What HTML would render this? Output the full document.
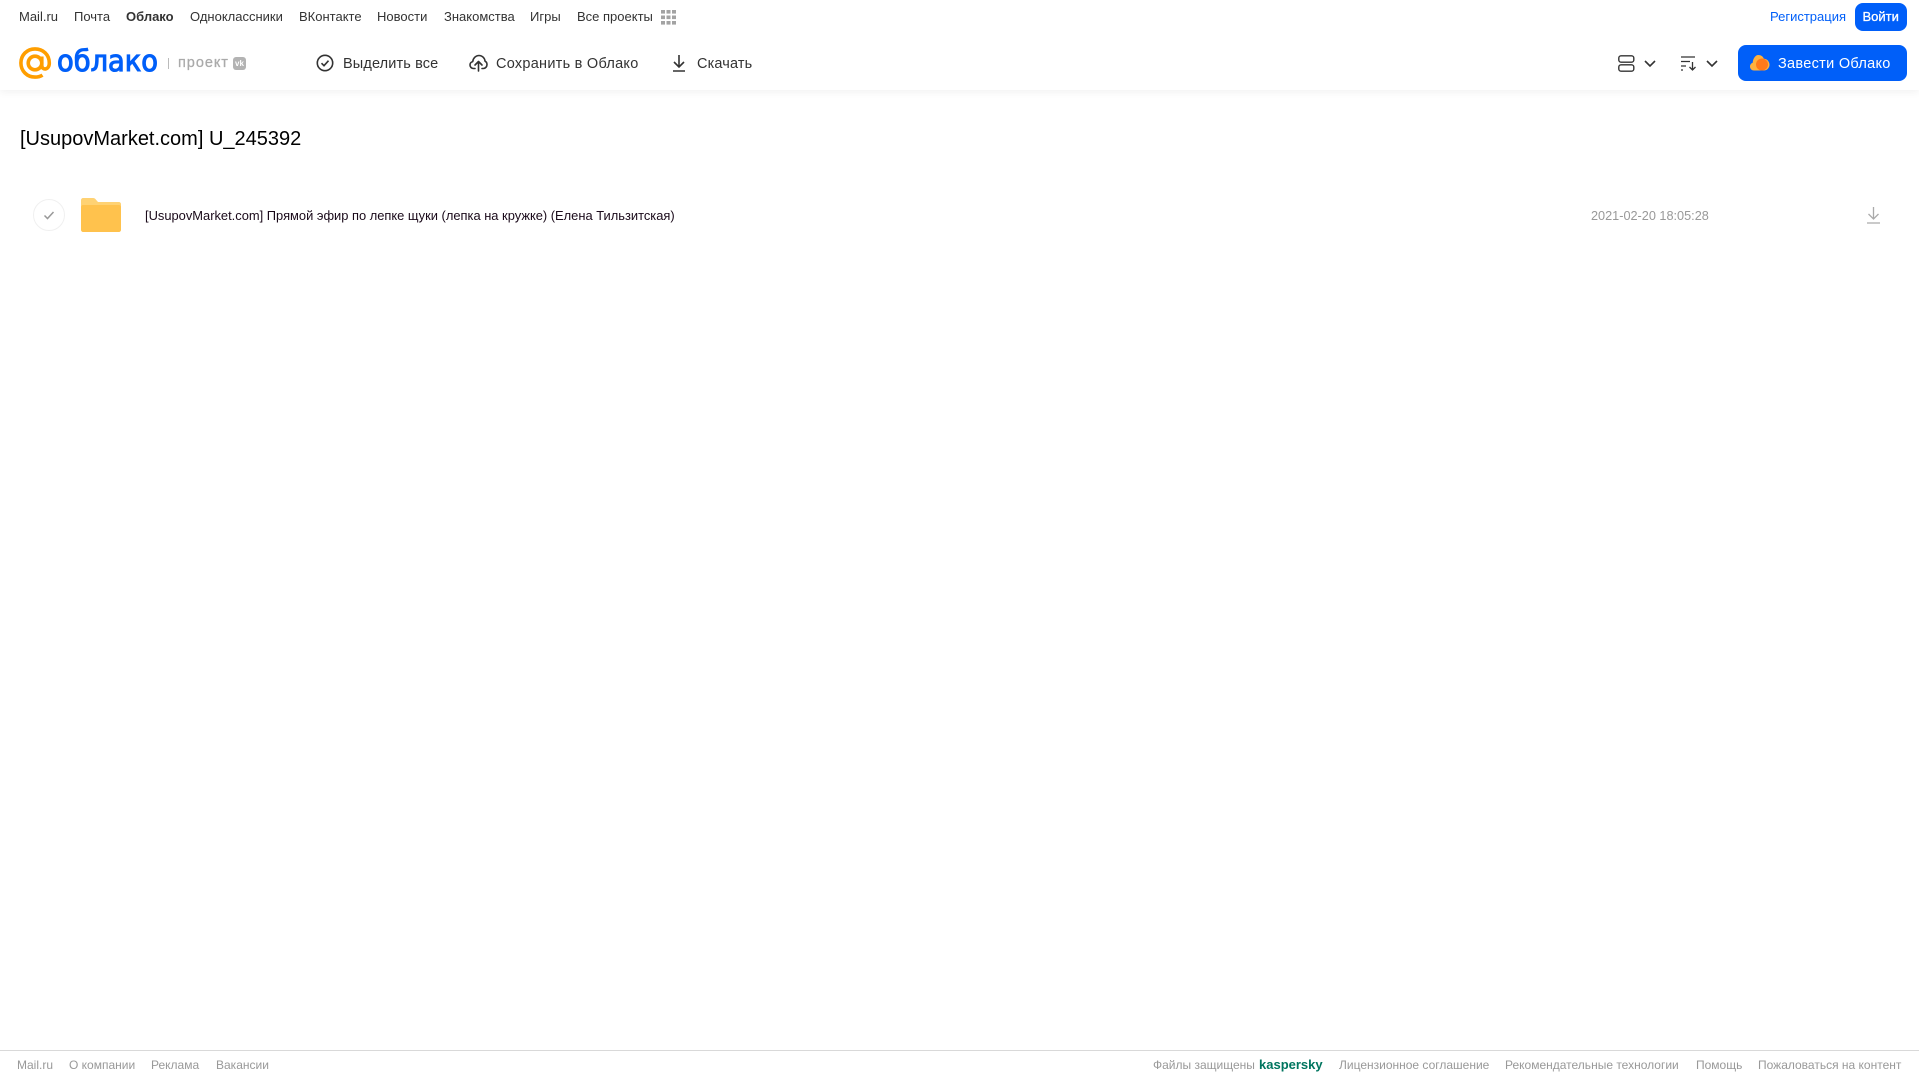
<!DOCTYPE html>
<html lang="ru">
<head>
<meta charset="utf-8">
<title>Облако</title>
<style>
html,body{margin:0;padding:0;width:1919px;height:1079px;overflow:hidden;background:#fff;font-family:"Liberation Sans",sans-serif;}
.t{position:absolute;white-space:nowrap;line-height:18px;height:18px;}
.nav{top:8px;font-size:13px;color:#333;}
.tool{top:54.500px;font-size:14.500px;color:#333;letter-spacing:.13px;}
.ft{top:1056px;font-size:12px;color:#999;}
svg{position:absolute;overflow:visible;}
#hdr{position:absolute;left:0;top:0;width:1919px;height:90px;background:#fff;box-shadow:0 2px 8px rgba(0,0,0,.06);}
.btn{position:absolute;background:#005ff9;border-radius:8px;}
#fline{position:absolute;left:0;top:1050px;width:1919px;height:1px;background:#d9d9d9;}
</style>
</head>
<body>
<div id="hdr"></div>

<span class="t nav" style="left:19px">Mail.ru</span>
<span class="t nav" style="left:74px">Почта</span>
<span class="t nav" style="left:126px;font-weight:bold">Облако</span>
<span class="t nav" style="left:190px">Одноклассники</span>
<span class="t nav" style="left:299px">ВКонтакте</span>
<span class="t nav" style="left:377px">Новости</span>
<span class="t nav" style="left:444px">Знакомства</span>
<span class="t nav" style="left:530px">Игры</span>
<span class="t nav" style="left:577px">Все проекты</span>
<svg style="left:661px;top:10px" width="15" height="15" fill="#a3a3a3">
<rect x="0" y="0" width="4" height="3.600"/><rect x="5.500" y="0" width="4" height="3.600"/><rect x="11" y="0" width="4" height="3.600"/>
<rect x="0" y="5.500" width="4" height="3.600"/><rect x="5.500" y="5.500" width="4" height="3.600"/><rect x="11" y="5.500" width="4" height="3.600"/>
<rect x="0" y="11" width="4" height="3.600"/><rect x="5.500" y="11" width="4" height="3.600"/><rect x="11" y="11" width="4" height="3.600"/>
</svg>

<span class="t nav" style="left:1770px;color:#005ff9">Регистрация</span>
<div class="btn" style="left:1855px;top:3px;width:52px;height:28px"></div>
<span class="t nav" style="left:1862.500px;color:#fff;font-size:13px;-webkit-text-stroke:.3px #fff">Войти</span>

<!-- logo -->
<svg style="left:19px;top:47px" width="33" height="33" viewBox="0 0 33 33" fill="none" stroke="#ff9e00" stroke-width="3.600">
<circle cx="16" cy="16" r="6.800"/>
<path d="M22.800 9.500v9c0 5 7.500 5 7.500-2.500C30.300 7.500 24 1.900 16 1.900 8 1.900 1.900 8 1.900 16S8 30.100 16 30.100c3 0 5.500-.7 7.500-2"/>
</svg>
<svg style="left:56px;top:42px" width="110" height="40">
<text x="1" y="29" font-family="'DejaVu Sans',sans-serif" font-size="29" fill="#005ff9" stroke="#005ff9" stroke-width="1.100" textLength="101" lengthAdjust="spacingAndGlyphs">облако</text>
</svg>
<div style="position:absolute;left:168px;top:58px;width:1px;height:11px;background:#bbb"></div>
<span class="t" style="left:178px;top:54px;font-size:14.500px;color:#aaa;letter-spacing:.95px;-webkit-text-stroke:.25px #aaa">проект</span>
<div style="position:absolute;left:233px;top:57px;width:13px;height:13px;border-radius:3px;background:#b3b3b3;color:#fff;font-size:8px;font-weight:bold;line-height:13px;text-align:center">vk</div>

<!-- toolbar -->
<svg style="left:316px;top:54px" width="18" height="18" viewBox="0 0 18 18" fill="none" stroke="#333" stroke-width="1.600">
<circle cx="9" cy="9" r="7.700"/><path d="M5.500 9.200l2.500 2.500 4.500-5"/>
</svg>
<span class="t tool" style="left:343px">Выделить все</span>
<svg style="left:469px;top:54px" width="19" height="18" viewBox="0 0 19 18" fill="none" stroke="#333" stroke-width="1.600" stroke-linejoin="round" stroke-linecap="round">
<path d="M6 14.500H4.500C2.500 14.500 1 13 1 11c0-1.700 1.100-3 2.700-3.400C4.200 4 6.800 1.500 10 1.500c3.300 0 5.800 2.600 6 5.600 1.200.6 2 1.900 2 3.400 0 2.200-1.600 4-3.600 4H13"/>
<path d="M9.500 17V8M6 11l3.500-3.500L13 11"/>
</svg>
<span class="t tool" style="left:496px;letter-spacing:.26px">Сохранить в Облако</span>
<svg style="left:672px;top:54px" width="14" height="18" viewBox="0 0 14 18" fill="none" stroke="#333" stroke-width="1.600">
<path d="M7 1v12M2 8l5 5 5-5M1 17h12"/>
</svg>
<span class="t tool" style="left:697px">Скачать</span>

<!-- view controls -->
<svg style="left:1618px;top:55px" width="17" height="17" viewBox="0 0 17 17" fill="none" stroke="#333" stroke-width="1.400">
<rect x=".8" y=".8" width="15" height="6.400" rx="2.200"/><rect x=".8" y="9.800" width="15" height="6.400" rx="2.200"/>
</svg>
<svg style="left:1644px;top:60px" width="12" height="7" viewBox="0 0 12 7" fill="none" stroke="#333" stroke-width="1.600"><path d="M1 1l5 5 5-5"/></svg>
<svg style="left:1681px;top:56px" width="16" height="15" viewBox="0 0 16 15" fill="none" stroke="#333" stroke-width="1.300">
<path d="M0 1h14M0 5.500h9M0 10h5M0 14h2M11.500 6v8M8.500 11l3 3 3-3"/>
</svg>
<svg style="left:1706px;top:60px" width="12" height="7" viewBox="0 0 12 7" fill="none" stroke="#333" stroke-width="1.600"><path d="M1 1l5 5 5-5"/></svg>

<div class="btn" style="left:1738px;top:45px;width:169px;height:36px"></div>
<svg style="left:1750px;top:54px" width="20" height="17" viewBox="0 0 20 17">
<path d="M4 16.500C1.800 16.500 0 14.800 0 12.500c0-1.800 1.100-3.300 2.700-3.800C3 5 5 1 8.500 1c2.500 0 4.500 1.500 5.300 3.600C17 4.800 19.500 7.500 19.500 10.700c0 3.300-2.600 5.800-5.800 5.800z" fill="#ffb13d"/>
<circle cx="12" cy="10.500" r="6" fill="#ff7a1a"/>
</svg>
<span class="t" style="left:1778px;top:54.500px;font-size:14.500px;color:#fff;letter-spacing:.3px">Завести Облако</span>

<!-- title -->
<span class="t" style="left:20px;top:126px;height:26px;line-height:26px;font-size:20px;color:#000">[UsupovMarket.com] U_245392</span>

<!-- row -->
<svg style="left:33px;top:199px" width="32" height="32" viewBox="0 0 32 32" fill="none">
<circle cx="16" cy="16" r="15.500" stroke="#f0f0f0"/>
<path d="M11.500 16.500l3 3 6-6.500" stroke="#999" stroke-width="1.500"/>
</svg>
<svg style="left:81px;top:198px" width="40" height="34" viewBox="0 0 40 34">
<path d="M2 0h10c1.500 0 2.300.7 3 1.700L17 4h21c1 0 2 1 2 2v8H0V2C0 1 1 0 2 0z" fill="#ffd273"/>
<path d="M2 7h36c1 0 2 1 2 2v23c0 1-1 2-2 2H2c-1 0-2-1-2-2V9c0-1 1-2 2-2z" fill="#ffc24d"/>
</svg>
<span class="t" style="left:145px;top:206.500px;font-size:12.900px;color:#1a0a1a">[UsupovMarket.com] Прямой эфир по лепке щуки (лепка на кружке) (Елена Тильзитская)</span>
<span class="t" style="left:1591px;top:206.500px;font-size:12.700px;color:#999">2021-02-20 18:05:28</span>
<svg style="left:1867px;top:207px" width="13" height="17" viewBox="0 0 13 17" fill="none" stroke="#aaa" stroke-width="1.300">
<path d="M6.500 0v12M1.500 7l5 5 5-5M0 16h13"/>
</svg>

<!-- footer -->
<div id="fline"></div>
<span class="t ft" style="left:17px">Mail.ru</span>
<span class="t ft" style="left:69px">О компании</span>
<span class="t ft" style="left:151px">Реклама</span>
<span class="t ft" style="left:216px">Вакансии</span>
<span class="t ft" style="left:1153px">Файлы защищены</span>
<span class="t ft" style="left:1259px;font-weight:bold;color:#00755f;font-size:13px">kaspersky</span>
<span class="t ft" style="left:1339px">Лицензионное соглашение</span>
<span class="t ft" style="left:1505px">Рекомендательные технологии</span>
<span class="t ft" style="left:1696px">Помощь</span>
<span class="t ft" style="left:1758px">Пожаловаться на контент</span>
</body>
</html>
